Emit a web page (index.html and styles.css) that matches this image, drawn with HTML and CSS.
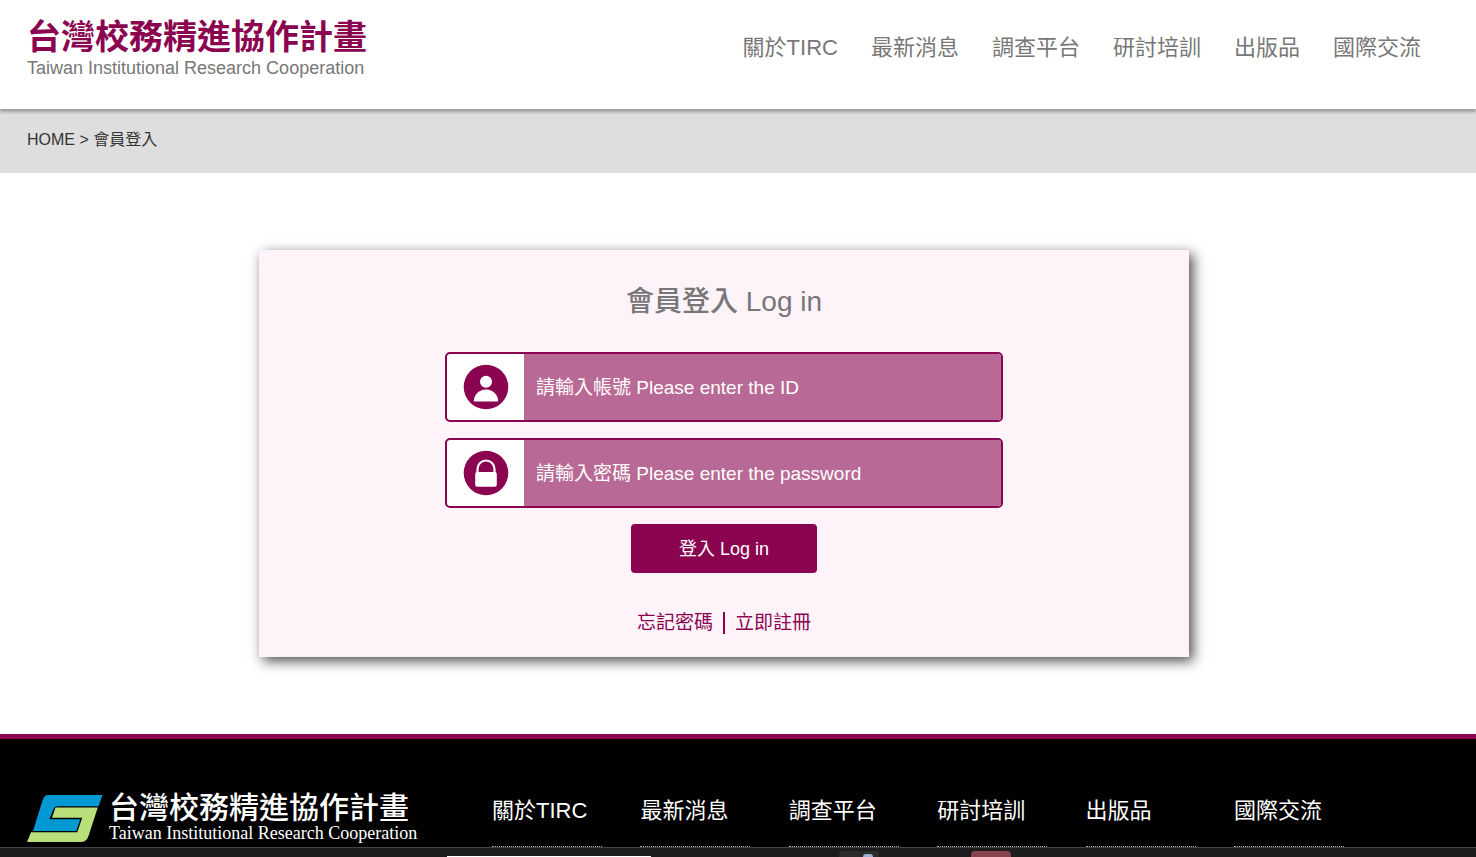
FILE: index.html
```html
<!DOCTYPE html>
<html lang="zh-Hant">
<head>
    <meta charset="UTF-8">
    <meta name="viewport" content="width=device-width, initial-scale=1.0">
    <title>會員登入</title>
    <link rel="stylesheet" href="styles.css">
</head>
<body>
    <header class="header">
        <a href="#" class="brand">
            <span class="brand-name">台灣校務精進協作計畫</span>
            <span class="brand-sub">Taiwan Institutional Research Cooperation</span>
        </a>
        <nav class="main-nav">
            <a href="#">關於TIRC</a>
            <a href="#">最新消息</a>
            <a href="#">調查平台</a>
            <a href="#">研討培訓</a>
            <a href="#">出版品</a>
            <a href="#">國際交流</a>
        </nav>
    </header>

    <div class="breadcrumb">
        <a href="#">HOME</a> &gt; <a href="#">會員登入</a>
    </div>

    <main class="content">
        <form class="login-box">
            <h1><b>會員登入</b> Log in</h1>
            <div class="field">
                <label for="account" aria-label="帳號">
                    <svg width="46" height="46" viewBox="0 0 46 46">
                        <circle cx="23" cy="23" r="22.3" fill="#8a0450"/>
                        <circle cx="23" cy="17.800" r="6" fill="#fff"/>
                        <path d="M10.800 37.500c0-7 5.200-12 12.200-12s12.200 5 12.200 12z" fill="#fff"/>
                    </svg>
                </label>
                <input type="text" id="account" placeholder="請輸入帳號 Please enter the ID">
            </div>
            <div class="field">
                <label for="password" aria-label="密碼">
                    <svg width="46" height="46" viewBox="0 0 46 46">
                        <circle cx="23" cy="23" r="22.3" fill="#8a0450"/>
                        <path d="M14.500 24v-5a8.500 8.500 0 0 1 17 0v5" fill="none" stroke="#fff" stroke-width="2.200"/>
                        <rect x="12.200" y="22" width="21.600" height="14.700" rx="2" fill="#fff"/>
                    </svg>
                </label>
                <input type="password" id="password" placeholder="請輸入密碼 Please enter the password">
            </div>
            <button type="submit" class="login-btn">登入 Log in</button>
            <div class="links">
                <a href="#">忘記密碼</a>
                <span class="divider"></span>
                <a href="#">立即註冊</a>
            </div>
        </form>
    </main>

    <footer class="footer">
        <a href="#" class="footer-logo">
            <svg width="76" height="48" viewBox="0 0 76 48">
                <path d="M21 0H75.500L71.500 11.300H31Q27.500 11.300 26.500 14L22.300 24.300H53.300L49.300 36H6L15.500 5.500Q17.300 0 21 0z" fill="#0099d3"/>
                <path d="M28.500 12.500H70.800L61.500 41Q59.500 47 54 47H0L4 37.200H50.300L55.200 22.800H25z" fill="#b8df7a"/>
            </svg>
            <span class="footer-brand">
                <span class="footer-name">台灣校務精進協作計畫</span>
                <span class="footer-sub">Taiwan Institutional Research Cooperation</span>
            </span>
        </a>
        <nav class="footer-nav">
            <a href="#">關於TIRC</a>
            <a href="#">最新消息</a>
            <a href="#">調查平台</a>
            <a href="#">研討培訓</a>
            <a href="#">出版品</a>
            <a href="#">國際交流</a>
        </nav>
    </footer>

    <div class="bottom-bar">
        <span class="bar-search"></span>
        <span class="bar-tab"><span class="bar-dot"></span></span>
        <span class="bar-tab bar-tab-red"></span>
    </div>
</body>
</html>
```

FILE: styles.css
```css
* {
    box-sizing: border-box;
}

html,
body {
    height: 100%;
}

body {
    margin: 0;
    overflow: hidden;
    font-family: "Liberation Sans", "Noto Sans CJK TC", sans-serif;
    background-color: #fff;
    display: flex;
    flex-direction: column;
}

a {
    color: inherit;
    text-decoration: none;
}

.header {
    position: relative;
    flex: none;
    display: flex;
    justify-content: space-between;
    align-items: flex-start;
    height: 109px;
    padding: 16px 55px 0 27px;
    background-color: #fff;
    box-shadow: 0 3px 3px rgba(0, 0, 0, 0.3);
    color: #777;
}

.brand {
    display: flex;
    flex-direction: column;
}

.brand-name {
    font-size: 34px;
    line-height: 42px;
    font-weight: bold;
    color: #8a0450;
}

.brand-sub {
    font-size: 18px;
    line-height: 20px;
}

.main-nav {
    display: flex;
    gap: 33px;
    padding-top: 16px;
    font-size: 22px;
    line-height: 32px;
}

.breadcrumb {
    flex: none;
    height: 64px;
    padding: 19px 27px;
    background-color: #dedede;
    color: #333;
    font-size: 16px;
    line-height: 24px;
}

.content {
    flex: none;
    display: flex;
    justify-content: center;
    padding: 77px 55px 77px 27px;
}

.login-box {
    display: flex;
    flex-direction: column;
    align-items: center;
    width: 66.7%;
    padding: 30px 0 18px;
    background-color: #fff3fa;
    box-shadow: 4px 4px 12px rgba(0, 0, 0, 0.7);
}

.login-box h1 {
    margin: 0 0 28px;
    font-size: 28px;
    line-height: 44px;
    font-weight: normal;
    color: #777;
}

.login-box h1 b {
    font-weight: 500;
}

.field {
    display: flex;
    width: 60%;
    height: 70px;
    margin-bottom: 16px;
    border: 2px solid #8a0450;
    border-radius: 5px;
    background-color: #fff;
    overflow: hidden;
}

.field label {
    flex: none;
    display: flex;
    align-items: center;
    justify-content: center;
    width: 77px;
}

.field input {
    flex: 1;
    min-width: 0;
    padding: 2px 12px 0;
    border: 0;
    outline: 0;
    background-color: #b96995;
    color: #fff;
    font-family: inherit;
    font-size: 19px;
}

.field input::placeholder {
    color: #fff;
    opacity: 1;
}

.login-btn {
    width: 20%;
    height: 49px;
    margin-bottom: 34px;
    padding: 0 0 4px;
    border: 0;
    border-radius: 4px;
    background-color: #8a0450;
    color: #fff;
    font-family: inherit;
    font-size: 18px;
    cursor: pointer;
}

.links {
    display: flex;
    align-items: center;
    gap: 10px;
    font-size: 19px;
    line-height: 32px;
    color: #8a0450;
}

.divider {
    width: 2px;
    height: 22px;
    background-color: #8a0450;
}

.footer {
    flex: 1;
    display: flex;
    align-items: flex-start;
    padding: 54px 27px 0;
    border-top: 5px solid #8a0450;
    background-color: #000;
    color: #fff;
}

.footer-logo {
    flex: none;
    display: flex;
    align-items: flex-end;
    gap: 6px;
    width: 465px;
}

.footer-brand {
    display: flex;
    flex-direction: column;
}

.footer-name {
    font-size: 30px;
    line-height: 30px;
    font-weight: 500;
}

.footer-sub {
    font-family: "Liberation Serif", serif;
    font-size: 18px;
    line-height: 20px;
}

.footer-nav {
    flex: 1;
    display: flex;
    justify-content: space-between;
    max-width: 852px;
    font-size: 22px;
    line-height: 36px;
}

.footer-nav a {
    width: 110px;
    height: 54px;
    border-bottom: 1px dotted #aaa;
}

/* 底部工具列 */
.bottom-bar {
    position: fixed;
    left: 0;
    right: 0;
    bottom: 0;
    display: flex;
    align-items: flex-end;
    height: 10px;
    padding-left: 447px;
    border-top: 1px solid #444;
    background-color: #1c1c1c;
}

.bar-search {
    width: 204px;
    height: 1px;
    margin-right: 188px;
    background-color: #fff;
}

.bar-tab {
    display: flex;
    align-items: flex-end;
    justify-content: flex-end;
    width: 40px;
    height: 6px;
    margin-right: 92px;
    padding-right: 6px;
    border-radius: 4px 4px 0 0;
    background-color: #2b2b2b;
}

.bar-tab-red {
    background-color: #86434d;
}

.bar-dot {
    width: 10px;
    height: 3px;
    border-radius: 5px 5px 0 0;
    background-color: #9db0d3;
}
```
